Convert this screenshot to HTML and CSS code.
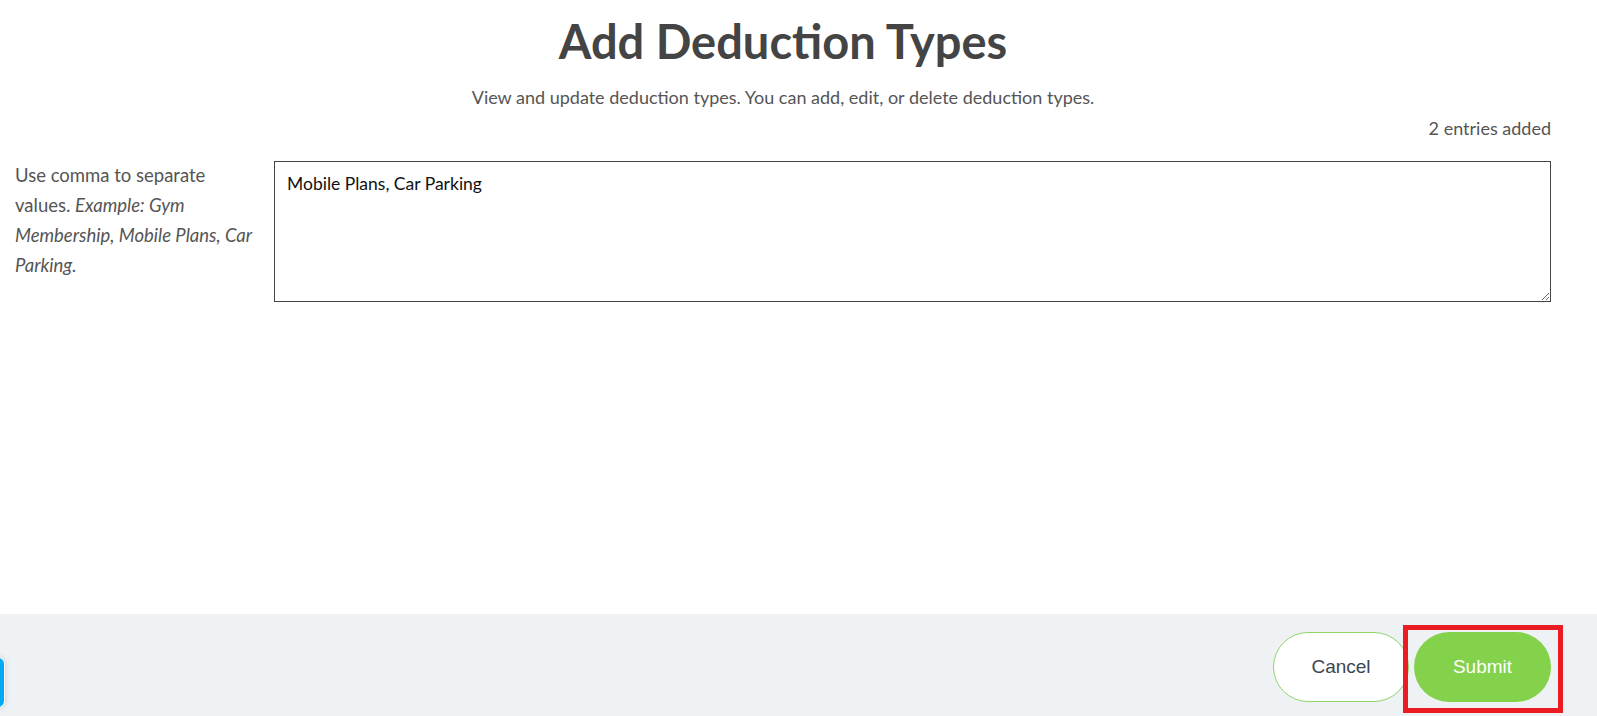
FILE: index.html
```html
<!DOCTYPE html>
<html lang="en">
<head>
<meta charset="utf-8">
<title>Add Deduction Types</title>
<link rel="stylesheet" href="styles.css">
</head>
<body>
<main class="page">
  <header class="intro">
    <h1 class="title">Add Deduction Types</h1>
    <p class="lead">View and update deduction types. You can add, edit, or delete deduction types.</p>
  </header>
  <div class="count">2 entries added</div>
  <div class="field-row">
    <label class="hint" for="types">Use comma to separate values. <em>Example: Gym Membership, Mobile Plans, Car Parking.</em></label>
    <textarea id="types" class="entry">Mobile Plans, Car Parking</textarea>
  </div>
</main>
<footer class="actions">
  <span class="chat-tab"></span>
  <button class="btn btn-outline" type="button">Cancel</button>
  <span class="highlight"><button class="btn btn-primary" type="submit">Submit</button></span>
</footer>
</body>
</html>
```
FILE: styles.css
```css
* { box-sizing: border-box; }
html, body { margin: 0; height: 100%; }
body {
  display: flex;
  flex-direction: column;
  font-family: Lato, "Open Sans", sans-serif;
  color: #4a4a4a;
  background: #fff;
  overflow: hidden;
}
.page {
  flex: 1;
  padding: 0 46px 0 15px;
}
.intro { text-align: center; }
.title {
  margin: 0;
  padding-top: 11px;
  font-size: 47px;
  line-height: 60px;
  font-weight: 700;
  color: #444;
}
.lead {
  margin: 15px 0 0;
  font-size: 18px;
  line-height: 22px;
  color: #555;
}
.count {
  margin-top: 9px;
  text-align: right;
  font-size: 18px;
  line-height: 22px;
  color: #555;
}
.field-row {
  display: flex;
  gap: 19px;
  margin-top: 22px;
}
.hint {
  flex: 0 0 240px;
  margin-top: -1px;
  font-size: 18.5px;
  line-height: 30px;
  color: #555;
}
.hint em { font-style: italic; }
.entry {
  flex: 1;
  height: 141px;
  border: 1px solid #444;
  border-radius: 0;
  padding: 11px 12px;
  font-family: Lato, "Open Sans", sans-serif;
  font-size: 17.5px;
  line-height: 22px;
  color: #111;
  resize: vertical;
}
.actions {
  position: relative;
  height: 102px;
  background: #eef2f5;
  display: flex;
  justify-content: flex-end;
  align-items: flex-start;
  gap: 5px;
  padding: 18px 46px 0 0;
}
.chat-tab {
  position: absolute;
  left: -46px;
  top: 43px;
  width: 51px;
  height: 51px;
  border-radius: 7px;
  background: #04a9f4;
  border: 1px solid #fff;
  box-shadow: 0 0 6px rgba(0,0,0,0.15);
}
.btn {
  height: 70px;
  border-radius: 35px;
  font-family: "Liberation Sans", Arial, sans-serif;
  font-size: 19px;
  cursor: pointer;
}
.btn-outline {
  width: 136px;
  background: #fff;
  border: 1px solid #8fd46a;
  color: #3d4650;
}
.highlight {
  position: relative;
  display: block;
}
.highlight::after {
  content: "";
  position: absolute;
  left: -11px;
  right: -12px;
  top: -7px;
  bottom: -11px;
  border: 5px solid #ec1c24;
  pointer-events: none;
}
.btn-primary {
  display: block;
  width: 137px;
  background: #84d24c;
  border: none;
  color: #fff;
}
```
